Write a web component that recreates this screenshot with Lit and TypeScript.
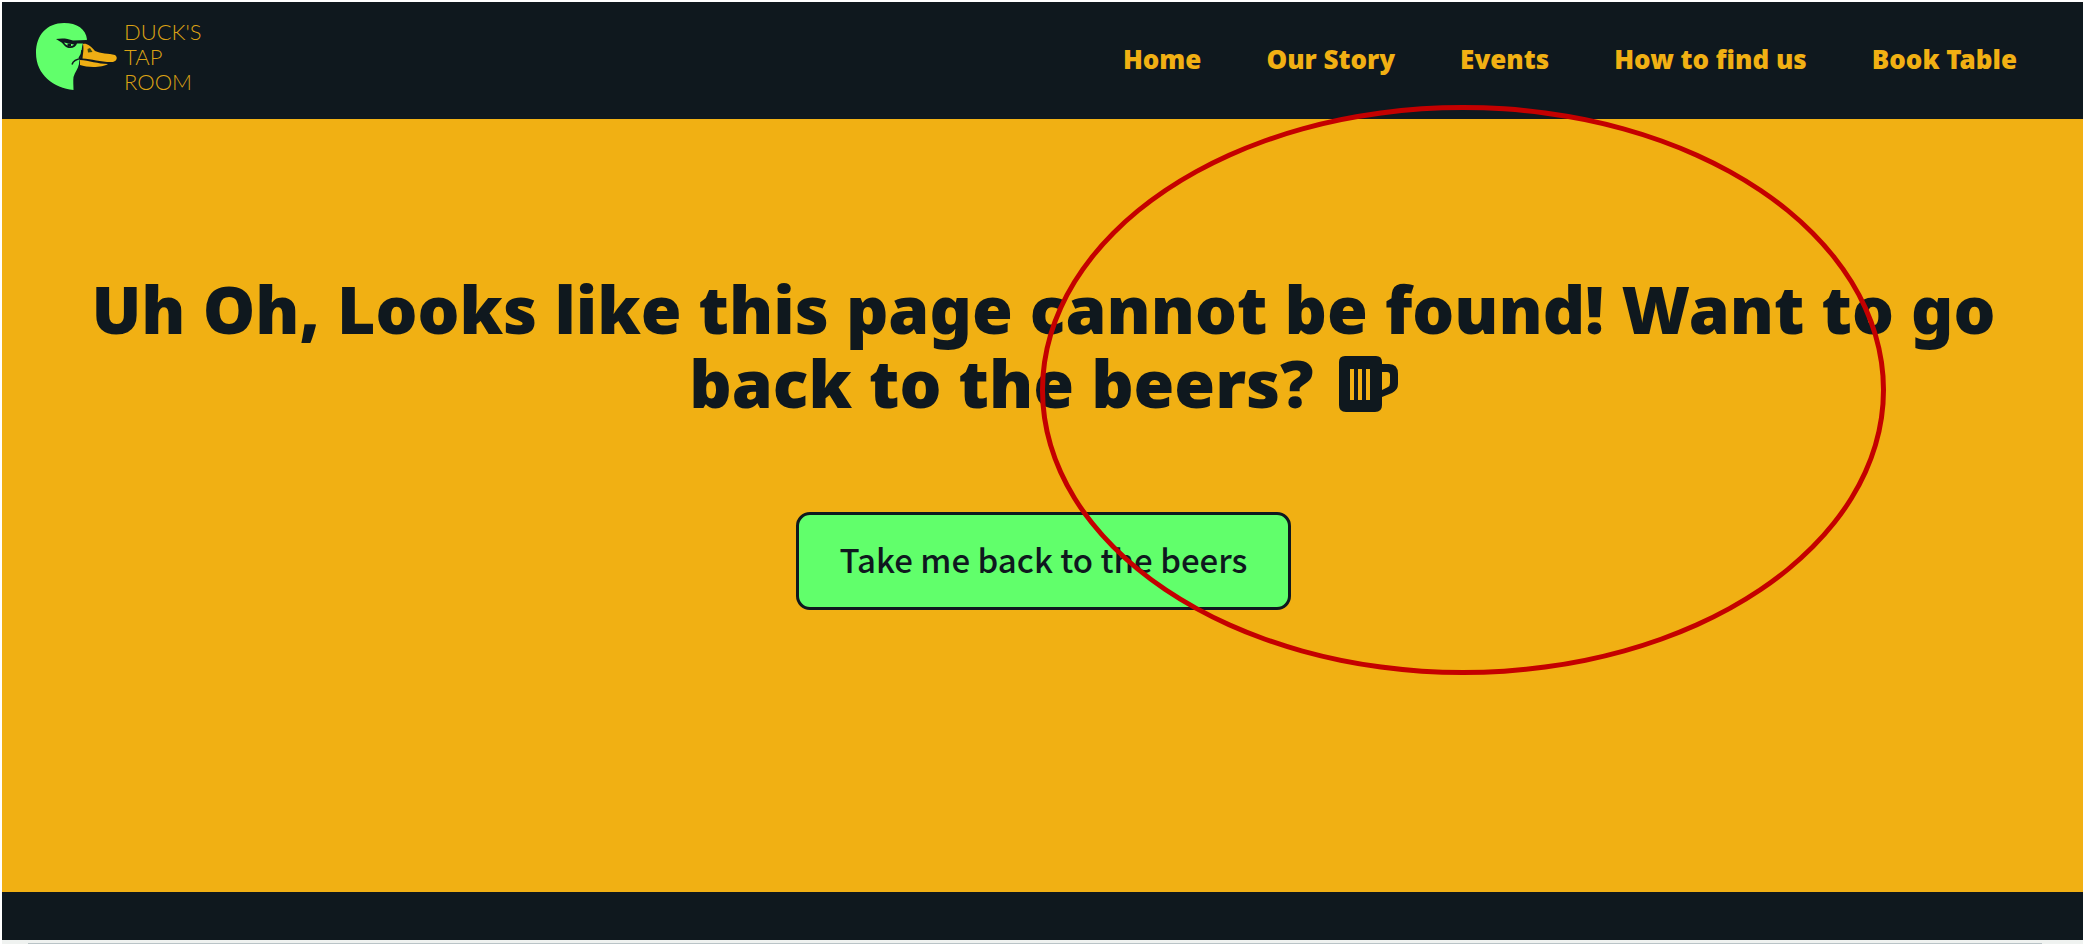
import { LitElement, html, css, svg } from "lit";
import { customElement } from "lit/decorators.js";

const LINKS = ["Home", "Our Story", "Events", "How to find us", "Book Table"];

const duck = svg`
  <path fill="#61ff6b" d="M37.500 67C18 65 0 52 0 30C0 12 11 0 28 0C41 0 50 6 51 16.500L47 20C45.500 24 46 28 45 32C44 35 43 38 43 41C42 46 39 49 37.500 54C37 58 37.500 62 37.500 67Z"/>
  <path fill="#0f181e" d="M20 16C25 15 31 15 37 17.500L50.500 17L49 20.500L41 20.500C40 24 36 26 31 24.500C28 23 27 20 24 18.500Z"/>
  <path fill="#61ff6b" d="M28 19.500L38 21.500C36 24 31 24 28 19.500Z"/>
  <path fill="#0f181e" d="M31.500 20.500h3.500v2.500h-3.500z"/>
  <path fill="none" stroke="#0f181e" stroke-width="1.500" d="M36 41.500C37 38 40 36 46 35.500M43 35.500C45 33 46 31 46 27"/>
  <path fill="#efae14" d="M47 21C50 20 54 22 59 28C64 30.500 73 30.500 79 32C82 34 81 38 77 39C66 39.500 56 36 46.500 35.500C47 30 48 26 47 21Z"/>
  <path fill="#efae14" d="M44 37C53 37.500 62 41 72 41C67 44.500 52 45 44 42Z"/>
  <path fill="#3f4a10" d="M51.500 26L54 25L56.500 29L52 29.500Z"/>
`;

@customElement("app-root")
export class AppRoot extends LitElement {
  static styles = css`
    :host {
      --ink: #0f181e;
      --amber: #f1b013;
      --green: #61ff6b;
      position: relative;
      box-sizing: border-box;
      display: flex;
      flex-direction: column;
      min-height: 100vh;
      padding: 2px 1px 1px 2px;
      overflow: hidden;
      background: #fff;
      color: var(--ink);
      font-family: "Noto Sans", sans-serif;
    }
    .header {
      display: flex;
      align-items: center;
      justify-content: space-between;
      padding: 0 66px 0 34px;
      background: var(--ink);
    }
    .brand {
      display: flex;
      align-items: center;
      gap: 7px;
      padding: 17px 0 25px;
      color: #dba214;
      text-decoration: none;
    }
    .duck {
      width: 81px;
      height: 67px;
    }
    .name {
      display: flex;
      flex-direction: column;
      font-family: Lato, sans-serif;
      font-size: 22px;
      font-weight: 300;
      line-height: 25px;
    }
    .nav {
      display: flex;
      gap: 65px;
      padding-bottom: 4px;
    }
    .link {
      color: var(--amber);
      font-size: 26px;
      font-weight: 900;
      line-height: 32px;
      text-decoration: none;
    }
    .main {
      flex: 1;
      display: flex;
      flex-direction: column;
      align-items: center;
      gap: 93px;
      padding: 152px 78px 0 80px;
      background: var(--amber);
    }
    .title {
      margin: 0;
      font-size: 66px;
      font-weight: 900;
      line-height: 74px;
      text-align: center;
    }
    .mug {
      width: 59px;
      height: 56px;
      margin-left: 8px;
      vertical-align: -4px;
    }
    .cta {
      padding: 0 41px 4px;
      border: 3px solid var(--ink);
      border-radius: 14px;
      background: var(--green);
      color: var(--ink);
      font: 500 33px/88px "Noto Sans CJK JP", sans-serif;
    }
    .footer {
      height: 48px;
      background: var(--ink);
    }
    .edge {
      display: flex;
      align-items: flex-end;
      height: 4px;
      padding: 0 41px 0 26px;
      background: #eff2f0;
    }
    .line {
      flex: 1;
      height: 1px;
      background: #b9c3c6;
    }
    .ring {
      position: absolute;
      right: 198px;
      top: 105px;
      width: 846px;
      height: 570px;
      box-sizing: border-box;
      border: 5px solid #c40000;
      border-radius: 50%;
      pointer-events: none;
    }
  `;

  render() {
    return html`
      <header class="header">
        <a class="brand" href="#">
          <svg class="duck" viewBox="0 0 81 67" aria-hidden="true">${duck}</svg>
          <span class="name"><span>DUCK'S</span><span>TAP</span><span>ROOM</span></span>
        </a>
        <nav class="nav">
          ${LINKS.map((label) => html`<a class="link" href="#">${label}</a>`)}
        </nav>
      </header>
      <main class="main">
        <h1 class="title">
          Uh Oh, Looks like this page cannot be found! Want to go back to the beers?
          <svg class="mug" viewBox="0 0 59 56" aria-hidden="true">
            <path
              fill="#0f181e"
              fill-rule="evenodd"
              d="M6 0H37Q43 0 43 6V8H50Q59 8 59 18V28Q59 34 53 37L43 41V49Q43 56 36 56H7Q0 56 0 49V6Q0 0 6 0ZM11 13V44H15V13ZM19 13V44H23V13ZM27 13V44H31V13ZM43 16V34L49 31Q51 30 51 27V19Q51 16 48 16Z"
            />
          </svg>
        </h1>
        <button class="cta" type="button">Take me back to the beers</button>
      </main>
      <footer class="footer"></footer>
      <div class="edge"><span class="line"></span></div>
      <div class="ring"></div>
    `;
  }
}
